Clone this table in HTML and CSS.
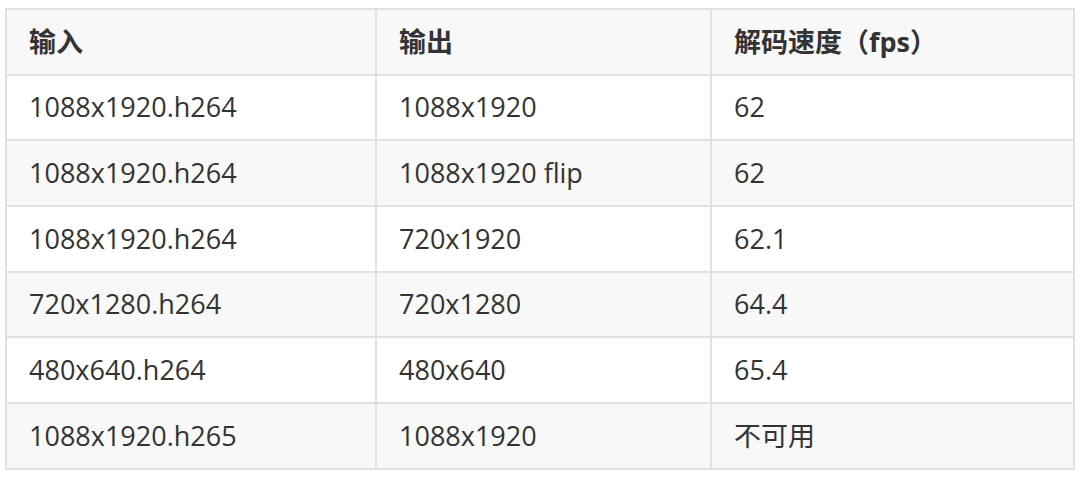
FILE: index.html
```html
<!DOCTYPE html>
<html lang="zh">
<head>
<meta charset="utf-8">
<link rel="stylesheet" href="styles.css">
</head>
<body>
<table class="data">
  <colgroup>
    <col class="c1"><col class="c2"><col class="c3">
  </colgroup>
  <thead>
    <tr><th>输入</th><th>输出</th><th>解码速度（fps）</th></tr>
  </thead>
  <tbody>
    <tr><td>1088x1920.h264</td><td>1088x1920</td><td>62</td></tr>
    <tr><td>1088x1920.h264</td><td>1088x1920 flip</td><td>62</td></tr>
    <tr><td>1088x1920.h264</td><td>720x1920</td><td>62.1</td></tr>
    <tr><td>720x1280.h264</td><td>720x1280</td><td>64.4</td></tr>
    <tr><td>480x640.h264</td><td>480x640</td><td>65.4</td></tr>
    <tr><td>1088x1920.h265</td><td>1088x1920</td><td>不可用</td></tr>
  </tbody>
</table>
</body>
</html>
```
FILE: styles.css
```css
html, body {
  margin: 0;
  background: #ffffff;
}
body {
  padding: 8px 0 0 5px;
  font-family: "Open Sans", "Noto Sans CJK SC", sans-serif;
  color: #333333;
}
.data {
  border-collapse: collapse;
  width: 1068px;
  table-layout: fixed;
  font-size: 27px;
}
.c1 { width: 370px; }
.c2 { width: 335px; }
.c3 { width: 363px; }
.data th,
.data td {
  border: 2px solid #dfe2e5;
  padding: 0 22px;
  height: 63.7px;
  text-align: left;
  vertical-align: middle;
  line-height: 1.2;
}
.data th {
  font-weight: 700;
  background: #f8f8f8;
}
.data tbody tr:nth-child(even) {
  background: #f8f8f8;
}
```
